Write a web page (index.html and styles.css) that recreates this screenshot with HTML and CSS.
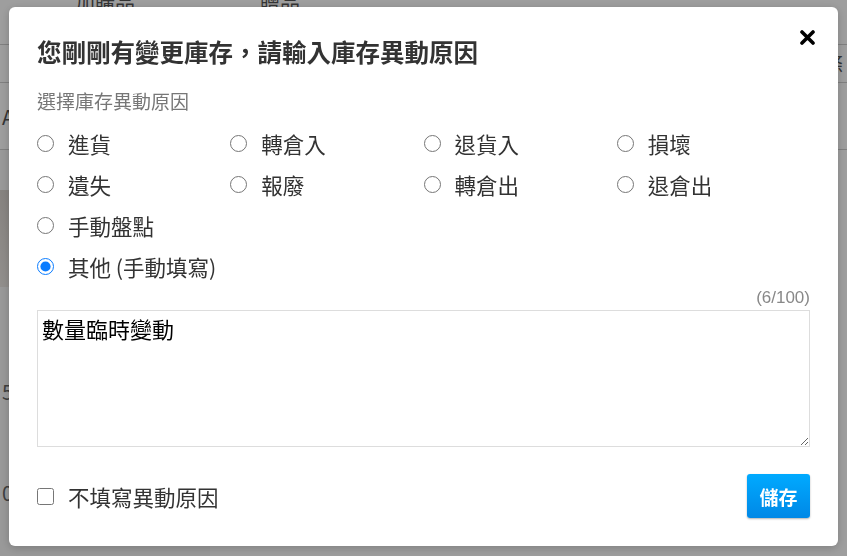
FILE: index.html
```html
<!DOCTYPE html>
<html lang="zh-Hant">
  <head>
    <meta charset="UTF-8" />
    <meta name="viewport" content="width=device-width, initial-scale=1.0" />
    <title>庫存管理</title>
    <link rel="stylesheet" href="styles.css">
  </head>
  <body>
    <!-- Stock table behind the dialog -->
    <main class="page">
      <div class="table-head">
        <div class="col-side">加購品</div>
        <div class="col-gift">贈品</div>
        <div class="col-rest"></div>
      </div>
      <div class="table-row row-filter">
        <div class="col-side"></div>
        <div class="col-rest col-end">條</div>
      </div>
      <div class="table-row row-tools">
        <div class="col-side">A</div>
        <div class="col-rest"></div>
      </div>
      <div class="table-row row-product">
        <div class="col-side">
          <div class="product-photo"></div>
          <div class="product-num">50</div>
          <div class="product-num">0</div>
        </div>
        <div class="col-rest col-bottom">
          <span class="qty-old">40</span>
          <span class="qty-change">+ 8 → 48</span>
        </div>
      </div>
    </main>

    <!-- Stock change reason dialog -->
    <div class="overlay">
      <div class="modal">
        <button class="modal-close" aria-label="關閉">
          <svg width="15" height="15" viewBox="0 0 15 15">
            <path d="M2 2 L13 13 M13 2 L2 13" stroke="#000" stroke-width="3.6" stroke-linecap="round" />
          </svg>
        </button>

        <h2 class="modal-title">您剛剛有變更庫存，請輸入庫存異動原因</h2>
        <p class="modal-label">選擇庫存異動原因</p>

        <div class="reason-grid">
          <label class="reason"><input type="radio" name="reason" />進貨</label>
          <label class="reason"><input type="radio" name="reason" />轉倉入</label>
          <label class="reason"><input type="radio" name="reason" />退貨入</label>
          <label class="reason"><input type="radio" name="reason" />損壞</label>
          <label class="reason"><input type="radio" name="reason" />遺失</label>
          <label class="reason"><input type="radio" name="reason" />報廢</label>
          <label class="reason"><input type="radio" name="reason" />轉倉出</label>
          <label class="reason"><input type="radio" name="reason" />退倉出</label>
          <label class="reason reason-wide"><input type="radio" name="reason" />手動盤點</label>
          <label class="reason reason-wide"><input type="radio" name="reason" checked />其他 (手動填寫)</label>
        </div>

        <div class="note-count">(6/100)</div>
        <textarea class="note-input">數量臨時變動</textarea>

        <div class="modal-footer">
          <label class="skip"><input type="checkbox" />不填寫異動原因</label>
          <button class="btn-save">儲存</button>
        </div>
      </div>
    </div>
  </body>
</html>
```

FILE: styles.css
```css
* {
  margin: 0;
  padding: 0;
  box-sizing: border-box;
  font-family: "Noto Sans CJK TC", "Noto Sans", sans-serif;
}

:root {
  --text: #333333;
  --muted: #777777;
  --line: #dddddd;
  --primary: #0a7cff;
}

body {
  background: #ffffff;
  color: var(--text);
  overflow: hidden;
}

/* Page behind */
.page {
  margin-top: -22px;
  display: flex;
  flex-direction: column;
}

.table-head,
.table-row {
  display: flex;
  border-bottom: 1px solid #cfcfcf;
}

.table-head {
  height: 67px;
  font-size: 20px;
  color: #555;
  align-items: flex-start;
  padding-top: 10px;
}

.col-side {
  width: 210px;
  text-align: center;
  flex-shrink: 0;
}

.col-gift {
  width: 140px;
  text-align: center;
}

.col-rest {
  flex: 1;
}

.col-end {
  text-align: right;
  padding-right: 4px;
  font-size: 20px;
  color: #555;
}

.row-filter {
  height: 38px;
  align-items: center;
}

.row-tools {
  height: 67px;
  align-items: center;
  font-size: 20px;
  color: #555;
}

.row-tools .col-side {
  text-align: left;
  padding-left: 2px;
}

.row-product {
  height: 430px;
  border-bottom: none;
}

.row-product .col-side {
  background: #f7f7f7;
  display: flex;
  flex-direction: column;
  align-items: flex-start;
  padding-top: 40px;
  font-size: 20px;
  color: #666;
}

.product-photo {
  width: 200px;
  height: 98px;
  background: linear-gradient(135deg, #d9d3ce, #efebe7 40%, #cfc8c2 70%, #e8e3de);
  margin-bottom: 90px;
}

.product-num {
  height: 103px;
  padding-left: 2px;
}

.col-bottom {
  display: flex;
  align-items: flex-end;
  gap: 8px;
  padding-left: 258px;
  font-size: 22px;
  font-family: "Liberation Sans", sans-serif;
}

.qty-old {
  color: #2f5fd0;
}

.qty-change {
  color: #0b7a45;
  font-weight: 700;
}

/* Dialog */
.overlay {
  position: fixed;
  inset: 0;
  background: rgba(0, 0, 0, 0.38);
  display: flex;
  align-items: flex-start;
  padding: 7px 9px;
}

.modal {
  position: relative;
  flex: 1;
  background: #ffffff;
  border-radius: 6px;
  box-shadow: 0 2px 10px rgba(0, 0, 0, 0.2);
  padding: 28px;
  display: flex;
  flex-direction: column;
}

.modal-close {
  position: absolute;
  top: 23px;
  right: 23px;
  width: 15px;
  height: 15px;
  background: none;
  border: none;
  cursor: pointer;
  display: flex;
}

.modal-title {
  font-size: 24.5px;
  line-height: 34px;
  font-weight: 700;
  color: #333;
}

.modal-label {
  margin-top: 18px;
  font-size: 19px;
  line-height: 28px;
  color: var(--muted);
}

.reason-grid {
  margin-top: 8px;
  display: grid;
  grid-template-columns: repeat(4, 1fr);
  grid-auto-rows: 41px;
}

.reason {
  display: flex;
  align-items: center;
  gap: 14px;
  font-size: 21.5px;
  color: var(--text);
  cursor: pointer;
}

.reason-wide {
  grid-column: 1 / -1;
}

.reason input {
  width: 17px;
  height: 17px;
  margin: 0;
  accent-color: var(--primary);
}

.note-count {
  margin-top: 1px;
  text-align: right;
  font-family: "Liberation Sans", sans-serif;
  font-size: 17px;
  line-height: 20px;
  color: #888;
}

.note-input {
  margin-top: 2px;
  height: 137px;
  border: 1px solid var(--line);
  padding: 3px 4px;
  font-size: 22px;
  line-height: 28px;
  color: #000;
  resize: vertical;
  outline: none;
}

.modal-footer {
  margin-top: 27px;
  display: flex;
  justify-content: space-between;
  align-items: center;
}

.skip {
  display: flex;
  align-items: center;
  gap: 14px;
  font-size: 21.5px;
  color: var(--text);
}

.skip input {
  width: 17px;
  height: 17px;
  margin: 0;
}

.btn-save {
  width: 63px;
  height: 44px;
  border: none;
  border-radius: 3px;
  background: linear-gradient(#00aaff, #0088e6);
  box-shadow: 0 1px 2px rgba(0, 0, 0, 0.3);
  color: #ffffff;
  font-size: 19px;
  font-weight: 700;
  cursor: pointer;
}
```
